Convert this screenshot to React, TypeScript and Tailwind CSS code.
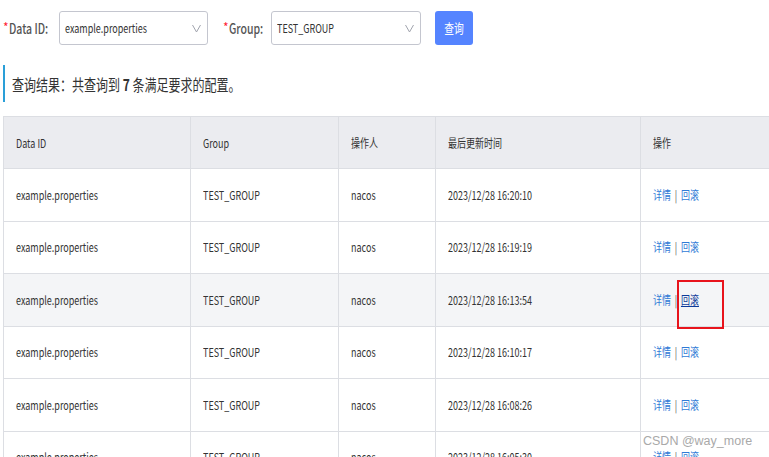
import React from 'react';

const rows = [
    { time: '2023/12/28 16:20:10' },
    { time: '2023/12/28 16:19:19' },
    { time: '2023/12/28 16:13:54', hover: true },
    { time: '2023/12/28 16:10:17' },
    { time: '2023/12/28 16:08:26' },
    { time: '2023/12/28 16:05:30' },
];

const font = { fontFamily: '"Noto Sans CJK SC", "Noto Sans", sans-serif' };

// the screenshot is squeezed sideways, so text is narrowed with scale-x
const Sq: React.FC<{ children: React.ReactNode; className?: string }> = ({ children, className = '' }) => (
    <span className={`inline-block whitespace-nowrap origin-left scale-x-75 ${className}`}>{children}</span>
);

const Chevron = () => (
    <svg width="9" height="9" viewBox="0 0 9 9" fill="none" stroke="#a0a3ad" strokeWidth="1">
        <polyline points="0.5,1 4.5,8 8.5,1" />
    </svg>
);

const Select: React.FC<{ value: string; width: string }> = ({ value, width }) => (
    <div className={`${width} h-[34px] border border-[#c4c6cf] rounded-[3px] bg-white flex items-center justify-between pl-[5px] pr-[6px]`}>
        <Sq className="text-[12px] text-[#333]">{value}</Sq>
        <Chevron />
    </div>
);

const Label: React.FC<{ text: string; width: string }> = ({ text, width }) => (
    <div className={`${width} flex items-center`}>
        <span className="text-[#f23] text-[12px] w-[8px] -mt-[3px]">*</span>
        <Sq className="text-[14px] font-medium text-[#555]">{text}</Sq>
    </div>
);

const App: React.FC = () => {
    return (
        <div className="w-[769px] h-[457px] overflow-hidden bg-white relative" style={font}>
            <div className="flex items-center h-[34px] mt-[11px] pl-[3px]">
                <Label text="Data ID:" width="w-[56px]" />
                <Select value="example.properties" width="w-[149px]" />
                <div className="w-[15px]" />
                <Label text="Group:" width="w-[48px]" />
                <Select value="TEST_GROUP" width="w-[150px]" />
                <button className="ml-[14px] w-[38px] h-[34px] rounded-[3px] bg-[#5584ff] text-white flex items-center justify-center">
                    <span className="inline-block text-[13px] scale-x-75">查询</span>
                </button>
            </div>

            <div className="mt-[20px] ml-[3px] border-l-[2px] border-[#2a9fd8] h-[37px] flex items-center pl-[7px]">
                <Sq className="text-[16px] text-[#333]">
                    查询结果：共查询到 <b className="font-bold">7</b> 条满足要求的配置。
                </Sq>
            </div>

            <div className="mt-[14px] ml-[3px] w-[800px] border-t border-l border-[#dcdee3] text-[12px] text-[#333]">
                <div className="flex h-[52px] bg-[#ebecf0] border-b border-[#dcdee3]">
                    <div className="w-[187px] border-r border-[#dcdee3] flex items-center pl-[12px]"><Sq>Data ID</Sq></div>
                    <div className="w-[148px] border-r border-[#dcdee3] flex items-center pl-[12px]"><Sq>Group</Sq></div>
                    <div className="w-[97px] border-r border-[#dcdee3] flex items-center pl-[12px]"><Sq>操作人</Sq></div>
                    <div className="w-[205px] border-r border-[#dcdee3] flex items-center pl-[12px]"><Sq>最后更新时间</Sq></div>
                    <div className="flex-1 flex items-center pl-[12px]"><Sq>操作</Sq></div>
                </div>
                {rows.map((r, i) => (
                    <div key={i} className={`flex h-[52.5px] border-b border-[#dcdee3] ${r.hover ? 'bg-[#f4f5f7]' : 'bg-white'}`}>
                        <div className="w-[187px] border-r border-[#dcdee3] flex items-center pl-[12px]"><Sq>example.properties</Sq></div>
                        <div className="w-[148px] border-r border-[#dcdee3] flex items-center pl-[12px]"><Sq>TEST_GROUP</Sq></div>
                        <div className="w-[97px] border-r border-[#dcdee3] flex items-center pl-[12px]"><Sq>nacos</Sq></div>
                        <div className="w-[205px] border-r border-[#dcdee3] flex items-center pl-[12px]"><Sq>{r.time}</Sq></div>
                        <div className="flex-1 flex items-center pl-[12px] relative">
                            <Sq>
                                <span className="text-[#2f7ad6]">详情</span>
                                <span className="text-[#555] mx-[5px]">|</span>
                                {r.hover ? (
                                    <span className="text-[#0d3a9a] underline">回滚</span>
                                ) : (
                                    <span className="text-[#2f7ad6]">回滚</span>
                                )}
                            </Sq>
                            {r.hover && (
                                <span className="absolute left-[36px] top-[6px] w-[47px] h-[49px] border-2 border-[#e8141c] z-10"></span>
                            )}
                        </div>
                    </div>
                ))}
            </div>

            <div className="absolute left-[643px] top-[432px] text-[12.5px] text-[#a9a9a9]" style={{ fontFamily: '"Liberation Sans", sans-serif' }}>
                CSDN @way_more
            </div>
        </div>
    );
};

export default App;
